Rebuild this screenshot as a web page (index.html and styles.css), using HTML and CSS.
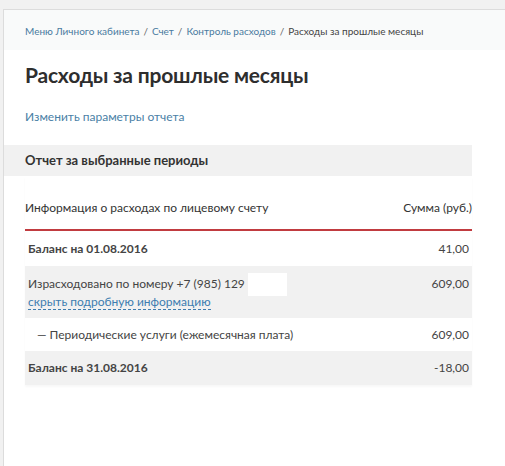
FILE: index.html
```html
<!DOCTYPE html>
<html lang="ru">
<head>
<meta charset="utf-8">
<link rel="stylesheet" href="styles.css">
</head>
<body>
<div class="page">
  <nav class="crumbs">
    <a href="#">Меню Личного кабинета</a><span class="sep">/</span><a href="#">Счет</a><span class="sep">/</span><a href="#">Контроль расходов</a><span class="sep">/</span><span class="cur">Расходы за прошлые месяцы</span>
  </nav>
  <main class="content">
    <h1 class="title">Расходы за прошлые месяцы</h1>
    <a class="params" href="#">Изменить параметры отчета</a>
    <div class="report">
      <div class="report-head">Отчет за выбранные периоды</div>
      <div class="table">
        <div class="thead"><span>Информация о расходах по лицевому счету</span><span>Сумма (руб.)</span></div>
        <div class="row bal"><span class="label">Баланс на 01.08.2016</span><span>41,00</span></div>
        <div class="row gray spent">
          <div class="cell">
            <div class="line">Израсходовано по номеру +7 (985) 129<span class="mask"></span></div>
            <a class="toggle" href="#">скрыть подробную информацию</a>
          </div>
          <span class="line">609,00</span>
        </div>
        <div class="row sub"><span>— Периодические услуги (ежемесячная плата)</span><span>609,00</span></div>
        <div class="row gray bal last"><span class="label">Баланс на 31.08.2016</span><span>-18,00</span></div>
      </div>
    </div>
  </main>
</div>
</body>
</html>
```
FILE: styles.css
```css
html, body {
  margin: 0;
  padding: 0;
}
body {
  background: #f1f1f1;
  font-family: "Lato", "Liberation Sans", sans-serif;
  color: #333;
  padding: 9px 0 0 3px;
  height: 466px;
  box-sizing: border-box;
  overflow: hidden;
}
.page {
  background: #fff;
  border-top: 1px solid #dcdcdc;
  border-left: 1px solid #dcdcdc;
  height: 100%;
}
a { text-decoration: none; color: #3f7ca6; }
.crumbs {
  background: #f9fafa;
  height: 40px;
  box-sizing: border-box;
  padding: 15px 0 0 21px;
  font-size: 10px;
  color: #444;
  white-space: nowrap;
}
.crumbs .sep { margin: 0 4px; color: #666; }
.crumbs a { color: #4a7aa0; }
.content {
  padding: 0 33px 0 0;
}
.title {
  margin: 0;
  padding: 10px 0 0 21px;
  font-size: 21px;
  font-weight: 700;
  letter-spacing: -0.2px;
  line-height: 30px;
  color: #2e2e2e;
}
.params {
  display: block;
  margin: 18px 0 0 21px;
  font-size: 12px;
  line-height: 18px;
  color: #4a7fa6;
}
.report { margin-top: 19px; }
.report-head {
  background: #f1f1f1;
  height: 31px;
  line-height: 31px;
  padding-left: 21px;
  font-size: 13px;
  font-weight: 700;
  color: #333;
}
.table {
  margin-left: 21px;
  box-shadow: 0 2px 2px rgba(0,0,0,0.03);
}
.thead {
  display: flex;
  justify-content: space-between;
  font-size: 12px;
  height: 55px;
  line-height: 18px;
  padding-top: 23px;
  box-sizing: border-box;
  border-bottom: 2px solid #c13b40;
  color: #333;
}
.row {
  display: flex;
  justify-content: space-between;
  font-size: 12px;
  line-height: 18px;
  box-sizing: border-box;
  padding: 0 3px;
  align-items: center;
  color: #444;
}
.row.bal { height: 35px; }
.row.last { height: 34px; }
.row .label { font-weight: 700; }
.row.gray { background: #f1f1f1; }
.spent {
  align-items: flex-start;
  height: 52px;
  padding-top: 9px;
}
.spent .line { line-height: 18px; }
.mask {
  display: inline-block;
  width: 39px;
  height: 23px;
  margin: -6px 0 -6px 3px;
  background: #fff;
  vertical-align: middle;
}
.toggle {
  color: #3d7db0;
  border-bottom: 1px dashed #3d7db0;
  line-height: 15px;
}
.row.sub { height: 33px; padding-left: 12px; }
```
